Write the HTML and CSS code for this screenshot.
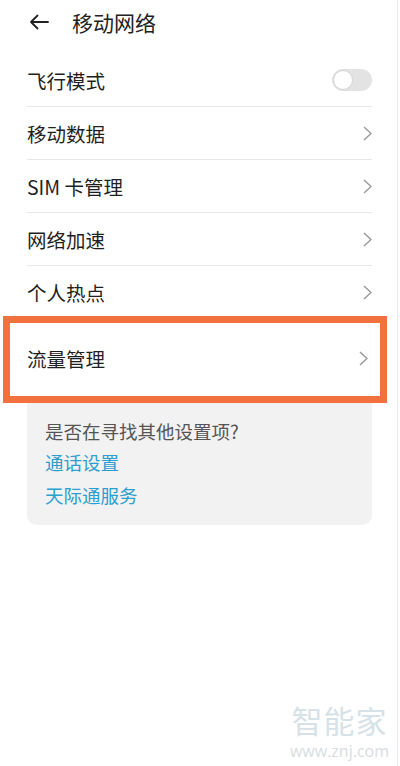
FILE: index.html
```html
<!DOCTYPE html>
<html lang="zh-CN">
<head>
  <meta charset="UTF-8">
  <title>移动网络</title>
  <link rel="stylesheet" href="styles.css">
</head>
<body>
  <div class="screen">

    <!-- top bar -->
    <div class="topbar">
      <svg class="back" width="20" height="16" viewBox="0 0 20 16">
        <path d="M19 8H2M8.5 1.5L2 8l6.5 6.5" fill="none" stroke="#222" stroke-width="1.8" stroke-linecap="round" stroke-linejoin="round"/>
      </svg>
      <span class="title">移动网络</span>
    </div>

    <!-- settings list -->
    <div class="list">
      <div class="row">
        <span>飞行模式</span>
        <span class="switch"><span class="knob"></span></span>
      </div>
      <div class="row">
        <span>移动数据</span>
        <svg class="chevron" viewBox="0 0 9 15"><path d="M1 1l7 6.5L1 14" /></svg>
      </div>
      <div class="row">
        <span>SIM 卡管理</span>
        <svg class="chevron" viewBox="0 0 9 15"><path d="M1 1l7 6.5L1 14" /></svg>
      </div>
      <div class="row">
        <span>网络加速</span>
        <svg class="chevron" viewBox="0 0 9 15"><path d="M1 1l7 6.5L1 14" /></svg>
      </div>
      <div class="row last">
        <span>个人热点</span>
        <svg class="chevron" viewBox="0 0 9 15"><path d="M1 1l7 6.5L1 14" /></svg>
      </div>
      <div class="row highlight">
        <span>流量管理</span>
        <svg class="chevron" viewBox="0 0 9 15"><path d="M1 1l7 6.5L1 14" /></svg>
      </div>
    </div>

    <!-- suggestions -->
    <div class="card">
      <div class="card-title">是否在寻找其他设置项?</div>
      <a class="card-link" href="#">通话设置</a>
      <a class="card-link" href="#">天际通服务</a>
    </div>

    <div class="watermark">
      <div class="wm-logo">智能家</div>
      <div class="wm-url">www.znj.com</div>
    </div>

  </div>
</body>
</html>
```

FILE: styles.css
```css
* {
  box-sizing: border-box;
}

body {
  margin: 0;
  background: #fff;
  font-family: "Noto Sans CJK SC", "Noto Sans", sans-serif;
  color: #1f1f1f;
}

.screen {
  width: 398px;
  height: 766px;
  border-right: 1px solid #ececec;
  display: flex;
  flex-direction: column;
}

.topbar {
  height: 44px;
  display: flex;
  align-items: center;
  padding-left: 29px;
}

.back {
  display: block;
  margin-right: 23px;
}

.title {
  font-size: 21px;
  color: #222;
}

.list {
  padding-top: 10px;
}

.row {
  height: 53px;
  margin: 0 25px 0 27px;
  display: flex;
  align-items: center;
  justify-content: space-between;
  border-bottom: 1px solid #e8e8e8;
  font-size: 19.5px;
}

.row.last {
  border-bottom: none;
}

.row.highlight {
  height: 87px;
  margin: -3px 10px 0 3px;
  padding: 0 12px 3px 17px;
  border: 7px solid #f3703f;
}

.chevron {
  width: 9px;
  height: 15px;
  fill: none;
  stroke: #9a9a9a;
  stroke-width: 1.5;
}

.switch {
  width: 40px;
  height: 22px;
  border-radius: 11px;
  background: #e3e3e3;
  display: flex;
  align-items: center;
  padding-left: 1px;
}

.knob {
  width: 20px;
  height: 20px;
  border-radius: 50%;
  background: #fff;
  border: 1px solid #d4d4d4;
}

.card {
  margin: 0 25px 0 27px;
  padding: 13px 18px 13px;
  background: #f2f2f2;
  border-radius: 0 0 10px 10px;
  display: flex;
  flex-direction: column;
}

.card-title {
  font-size: 18.5px;
  color: #555;
  line-height: 30px;
}

.card-link {
  font-size: 18.5px;
  color: #2e9dcf;
  text-decoration: none;
  line-height: 33px;
}

.watermark {
  margin-top: auto;
  align-self: flex-end;
  margin-right: 8px;
  padding-bottom: 5px;
  text-align: center;
  color: #d6e2e7;
}

.wm-logo {
  font-size: 31px;
  line-height: 42px;
  letter-spacing: 1px;
}

.wm-url {
  font-size: 16px;
  line-height: 20px;
  font-family: "Open Sans", sans-serif;
  color: #d8dde0;
}
```
